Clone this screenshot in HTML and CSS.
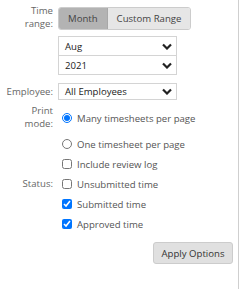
FILE: index.html
```html
<!DOCTYPE html>
<html lang="en">
<head>
    <meta charset="UTF-8">
    <title>Print Options</title>
    <link rel="stylesheet" href="styles.css">
</head>
<body>

    <div class="panel">

        <div class="rad tid">
            <div class="etikett">Time<br>range:</div>
            <div class="felt">
                <div class="knappgruppe">
                    <span class="knapp aktiv">Month</span>
                    <span class="knapp">Custom Range</span>
                </div>
            </div>
        </div>

        <div class="rad">
            <div class="etikett"></div>
            <div class="felt">
                <div class="velger topp">
                    <span>Aug</span>
                    <svg width="10" height="7" viewBox="0 0 10 7"><path d="M1 1.5 L5 5.5 L9 1.5" fill="none" stroke="#222" stroke-width="2.2"/></svg>
                </div>
                <div class="velger bunn">
                    <span>2021</span>
                    <svg width="10" height="7" viewBox="0 0 10 7"><path d="M1 1.5 L5 5.5 L9 1.5" fill="none" stroke="#222" stroke-width="2.2"/></svg>
                </div>
            </div>
        </div>

        <div class="rad midt">
            <div class="etikett">Employee:</div>
            <div class="felt">
                <div class="velger lav">
                    <span>All Employees</span>
                    <svg width="10" height="7" viewBox="0 0 10 7"><path d="M1 1.5 L5 5.5 L9 1.5" fill="none" stroke="#222" stroke-width="2.2"/></svg>
                </div>
            </div>
        </div>

        <div class="rad utskrift">
            <div class="etikett">Print<br>mode:</div>
            <div class="felt valg">
                <label class="linje forste"><input type="radio" name="mode" checked> Many timesheets per page</label>
                <label class="linje"><input type="radio" name="mode"> One timesheet per page</label>
                <label class="linje"><input type="checkbox"> Include review log</label>
            </div>
        </div>

        <div class="rad">
            <div class="etikett status">Status:</div>
            <div class="felt valg">
                <label class="linje"><input type="checkbox"> Unsubmitted time</label>
                <label class="linje"><input type="checkbox" checked> Submitted time</label>
                <label class="linje"><input type="checkbox" checked> Approved time</label>
            </div>
        </div>

        <div class="handling">
            <button class="bruk">Apply Options</button>
        </div>

    </div>

</body>
</html>
```

FILE: styles.css
```css
* {
    font-family: 'Open Sans', sans-serif;
    margin: 0;
    box-sizing: border-box;
}
body {
    background-color: white;
    font-size: 9.6px;
    color: #444;
}
.panel {
    width: 239px;
    height: 289px;
    border-right: 1px solid #cfcfcf;
    padding-top: 7px;
}
.rad {
    display: flex;
    gap: 5px;
}
.etikett {
    width: 53px;
    flex-shrink: 0;
    text-align: right;
    color: #666;
    line-height: 13.2px;
}
.felt {
    display: flex;
    flex-direction: column;
}
.tid {
    height: 23px;
}
.tid .etikett {
    margin-top: -3px;
}
.knappgruppe {
    display: flex;
    border: 1px solid #cccccc;
    border-radius: 3px;
    overflow: hidden;
    height: 23px;
}
.knapp {
    display: flex;
    align-items: center;
    padding: 0 9px;
    background-color: #e6e6e6;
    color: #444;
}
.knapp.aktiv {
    background-color: #b3b3b3;
    border-right: 1px solid #a8a8a8;
}
.velger {
    width: 119px;
    height: 20px;
    border: 1px solid #d4d4d4;
    display: flex;
    align-items: center;
    justify-content: space-between;
    padding: 0 4px 0 6px;
    color: #222;
    background-color: white;
}
.velger.topp {
    margin-top: 6px;
}
.velger.bunn {
    margin-top: -1px;
}
.velger.lav {
    height: 17px;
}
.midt {
    margin-top: 8px;
    align-items: center;
}
.utskrift {
    margin-top: 4px;
}
.utskrift .valg {
    padding-top: 4px;
}
.valg {
    padding-left: 4px;
}
.linje {
    display: flex;
    align-items: center;
    gap: 5px;
    height: 20px;
    color: #555;
}
.linje.forste {
    margin-bottom: 6px;
}
.linje input {
    width: 10px;
    height: 10px;
    margin: 0;
}
.etikett.status {
    line-height: 20px;
}
.handling {
    display: flex;
    justify-content: flex-end;
    padding-right: 5px;
    margin-top: 8px;
}
.bruk {
    background-color: #e0e0e0;
    border: 1px solid #cccccc;
    border-radius: 3px;
    color: #333;
    font-size: 9.6px;
    height: 22px;
    width: 80px;
    padding: 0;
}
```
